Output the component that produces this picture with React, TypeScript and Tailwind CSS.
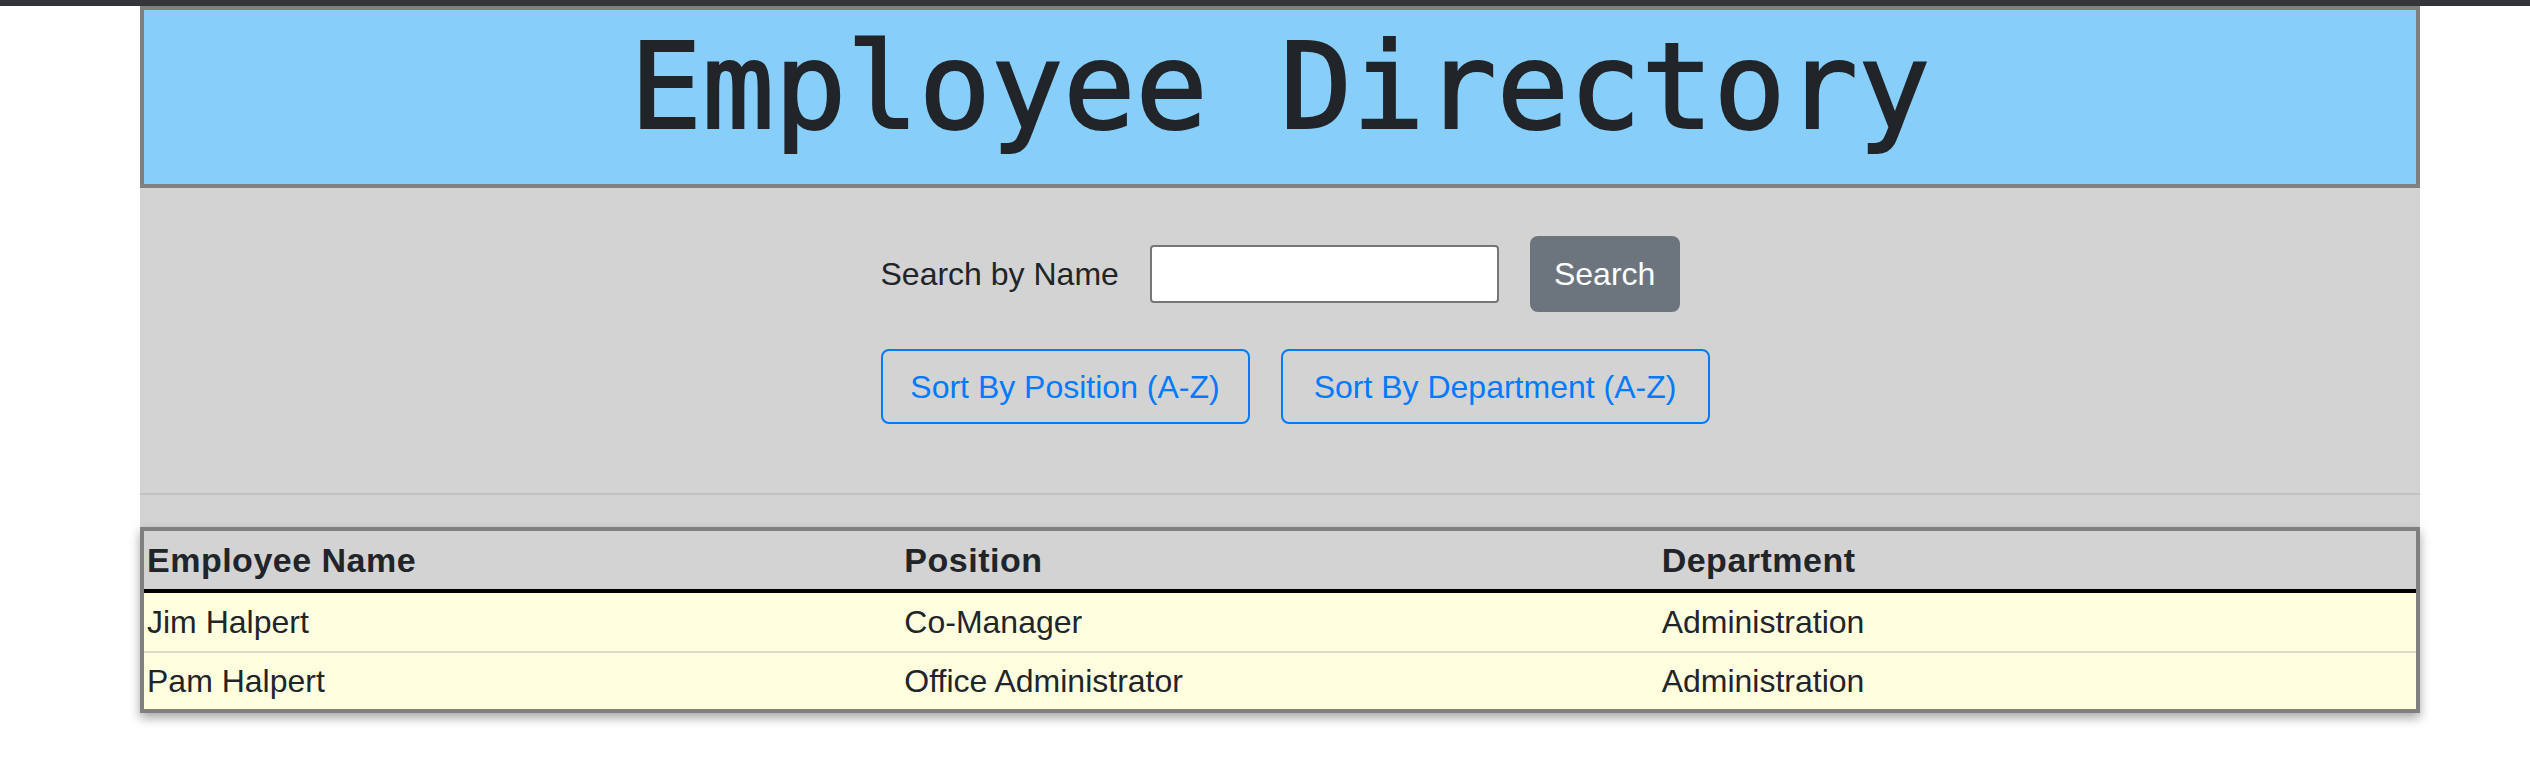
const employees = [
  { name: "Jim Halpert", position: "Co-Manager", department: "Administration" },
  { name: "Pam Halpert", position: "Office Administrator", department: "Administration" },
];

export default function App() {
  return (
    <div className="min-h-screen bg-white font-['Liberation_Sans',Arial,sans-serif] text-[32px] leading-[48px] text-[#212529]">
      {/* navbar strip at top */}
      <div className="h-[6px] bg-[#343538]" />

      <div className="ml-[140px] w-[2280px]">
        <header className="h-[182px] border-4 border-[#808080] bg-[#87cefa] pt-[5px] text-center">
          <h1 className="font-['DejaVu_Sans_Mono',monospace] text-[120px] leading-[144px] font-normal [-webkit-text-stroke:2px_#212529]">
            Employee Directory
          </h1>
        </header>

        <section className="bg-[#d3d3d3] pt-[48px] pb-[32px]">
          <div className="flex justify-center">
            <div className="w-[799px]">
              <form className="flex items-center gap-[31px]" onSubmit={(e) => e.preventDefault()}>
                <label htmlFor="search" className="whitespace-nowrap">
                  Search by Name
                </label>
                <input
                  id="search"
                  type="text"
                  className="h-[58px] w-[349px] rounded-[4px] border-2 border-[#767676] bg-white px-2"
                />
                <button
                  type="submit"
                  className="h-[76px] w-[151px] rounded-[8px] bg-[#6c757d] text-white"
                >
                  Search
                </button>
              </form>

              <div className="mt-[37px] flex gap-[31px]">
                <button className="h-[75px] w-[369px] shrink-0 whitespace-nowrap rounded-[8px] border-2 border-[#007bff] text-[#007bff]">
                  Sort By Position (A-Z)
                </button>
                <button className="h-[75px] w-[429px] shrink-0 whitespace-nowrap rounded-[8px] border-2 border-[#007bff] text-[#007bff]">
                  Sort By Department (A-Z)
                </button>
              </div>
            </div>
          </div>

          <hr className="mt-[69px] border-t-2 border-[rgba(0,0,0,0.08)]" />
        </section>

        <table className="w-full table-fixed border-separate border-spacing-0 border-4 border-[#808080] shadow-[0_5px_10px_rgba(0,0,0,0.35)]">
          <thead>
            <tr className="bg-[#d3d3d3]">
              <th className="border-b-4 border-black px-[3px] py-[5px] text-left text-[34px] font-bold tracking-[0.5px]">Employee Name</th>
              <th className="border-b-4 border-black px-[3px] py-[5px] text-left text-[34px] font-bold tracking-[0.5px]">Position</th>
              <th className="border-b-4 border-black px-[3px] py-[5px] text-left text-[34px] font-bold tracking-[0.5px]">Department</th>
            </tr>
          </thead>
          <tbody>
            {employees.map((emp, i) => (
              <tr key={emp.name} className="bg-[#ffffe0]">
                <td className={i === 0 ? "px-[3px] py-[5px]" : "border-t-2 border-[#dcdccc] px-[3px] py-[4px]"}>{emp.name}</td>
                <td className={i === 0 ? "px-[3px] py-[5px]" : "border-t-2 border-[#dcdccc] px-[3px] py-[4px]"}>{emp.position}</td>
                <td className={i === 0 ? "px-[3px] py-[5px]" : "border-t-2 border-[#dcdccc] px-[3px] py-[4px]"}>{emp.department}</td>
              </tr>
            ))}
          </tbody>
        </table>
      </div>
    </div>
  );
}
